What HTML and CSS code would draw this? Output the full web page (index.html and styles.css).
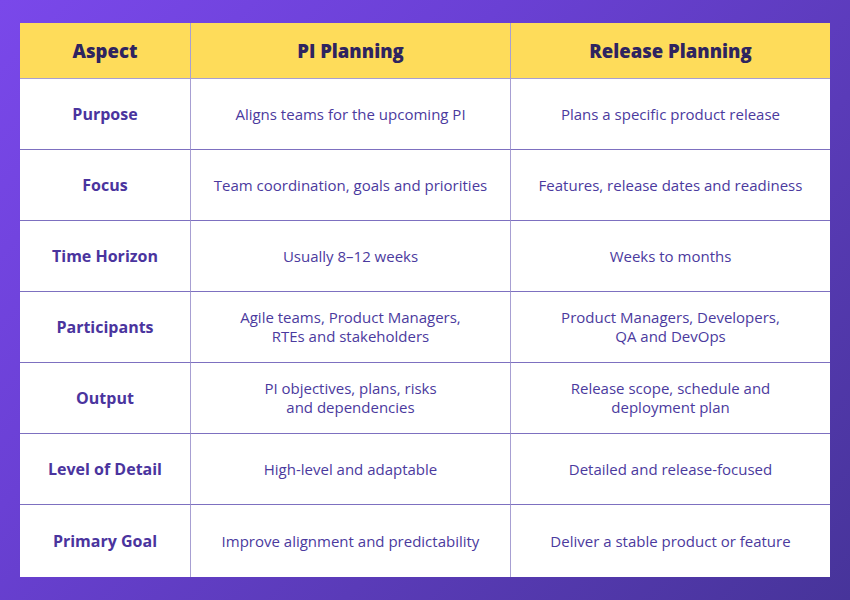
FILE: index.html
```html
<!DOCTYPE html>
<html>
<head>
<meta charset="utf-8">
<link rel="stylesheet" href="styles.css">
</head>
<body>
<div class="page">
  <div class="table">
    <div class="cell head">Aspect</div>
    <div class="cell head">PI Planning</div>
    <div class="cell head">Release Planning</div>

    <div class="cell label">Purpose</div>
    <div class="cell">Aligns teams for the upcoming PI</div>
    <div class="cell">Plans a specific product release</div>

    <div class="cell label">Focus</div>
    <div class="cell">Team coordination, goals and priorities</div>
    <div class="cell">Features, release dates and readiness</div>

    <div class="cell label">Time Horizon</div>
    <div class="cell">Usually 8–12 weeks</div>
    <div class="cell">Weeks to months</div>

    <div class="cell label">Participants</div>
    <div class="cell">Agile teams, Product Managers,<br>RTEs and stakeholders</div>
    <div class="cell">Product Managers, Developers,<br>QA and DevOps</div>

    <div class="cell label">Output</div>
    <div class="cell">PI objectives, plans, risks<br>and dependencies</div>
    <div class="cell">Release scope, schedule and<br>deployment plan</div>

    <div class="cell label">Level of Detail</div>
    <div class="cell">High-level and adaptable</div>
    <div class="cell">Detailed and release-focused</div>

    <div class="cell label">Primary Goal</div>
    <div class="cell">Improve alignment and predictability</div>
    <div class="cell">Deliver a stable product or feature</div>
  </div>
</div>
</body>
</html>
```
FILE: styles.css
```css
html, body {
  margin: 0;
  padding: 0;
}
body {
  width: 850px;
  height: 600px;
  overflow: hidden;
  font-family: "Open Sans", "DejaVu Sans", sans-serif;
}
.page {
  width: 850px;
  height: 600px;
  box-sizing: border-box;
  padding: 23px 20px;
  background: linear-gradient(135deg, #7a48ea 0%, #6a40d4 35%, #5a3bb8 65%, #47349a 100%);
}
.table {
  display: grid;
  grid-template-columns: 170px 320px 320px;
  grid-template-rows: 56px repeat(6, 71px) 72px;
  background: #ffffff;
}
.cell {
  display: flex;
  align-items: center;
  justify-content: center;
  text-align: center;
  font-size: 15px;
  line-height: 19px;
  color: #4b3a9e;
  border-bottom: 1px solid #7d70c0;
  border-left: 1px solid #a79fd2;
  box-sizing: border-box;
}
.cell:nth-child(3n+1) {
  border-left: none;
}
.cell:nth-last-child(-n+3) {
  border-bottom: none;
}
.head {
  background: #fedc5a;
  color: #2e2460;
  font-weight: 800;
  font-size: 18.5px;
  border-bottom-color: #a79fd2;
}
.label {
  font-weight: 700;
  font-size: 16px;
  color: #4a349e;
}
```
